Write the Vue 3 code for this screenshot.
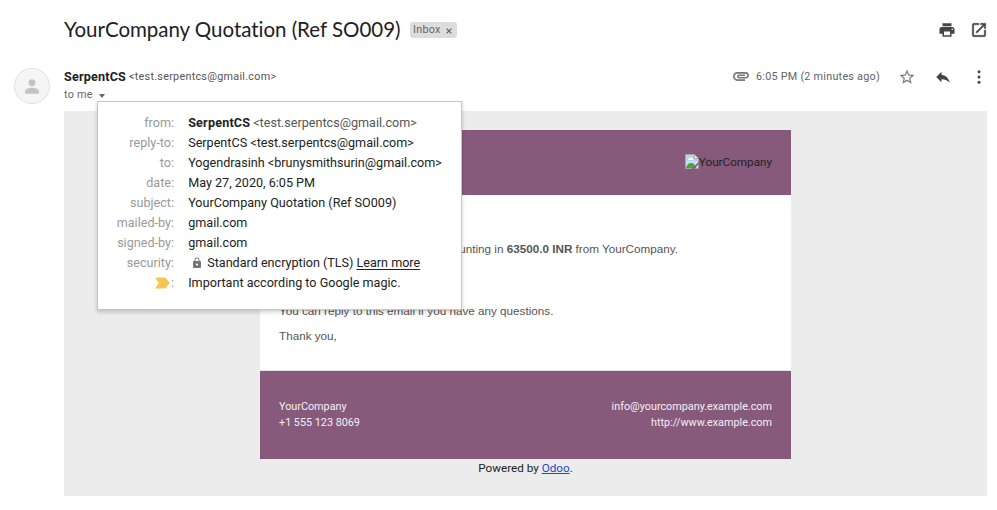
<script setup>
const details = [
  { label: 'from', name: 'SerpentCS', value: '<test.serpentcs@gmail.com>' },
  { label: 'reply-to', value: 'SerpentCS <test.serpentcs@gmail.com>' },
  { label: 'to', value: 'Yogendrasinh <brunysmithsurin@gmail.com>' },
  { label: 'date', value: 'May 27, 2020, 6:05 PM' },
  { label: 'subject', value: 'YourCompany Quotation (Ref SO009)' },
  { label: 'mailed-by', value: 'gmail.com' },
  { label: 'signed-by', value: 'gmail.com' },
  { label: 'security', value: 'Standard encryption (TLS)', secure: true },
  { label: '', value: 'Important according to Google magic.' },
]
</script>

<template>
  <main class="mail">
    <header class="subject">
      <h1>YourCompany Quotation (Ref SO009)</h1>
      <span class="chip">Inbox
        <svg class="close" viewBox="0 0 6 6"><path d="M.6.6l4.8 4.8M5.4.6L.6 5.4" /></svg>
      </span>
      <div class="tools">
        <svg class="icon" viewBox="0 0 24 24"><path d="M19 8H5c-1.66 0-3 1.34-3 3v6h4v4h12v-4h4v-6c0-1.66-1.34-3-3-3zm-3 11H8v-5h8v5zm3-7c-.55 0-1-.45-1-1s.45-1 1-1 1 .45 1 1-.45 1-1 1zm-1-9H6v4h12V3z" /></svg>
        <svg class="icon" viewBox="0 0 24 24"><path d="M19 19H5V5h7V3H5c-1.1 0-2 .9-2 2v14c0 1.100.9 2 2 2h14c1.100 0 2-.9 2-2v-7h-2v7zM14 3v2h3.590l-9.830 9.830 1.410 1.410L19 6.410V10h2V3h-7z" stroke="#444" stroke-width=".5" /></svg>
      </div>
    </header>

    <section class="sender">
      <div class="avatar">
        <svg viewBox="0 0 14 15"><circle cx="7" cy="3.700" r="3.400" /><path d="M0 14.700v-2.200C0 10 3.500 8.800 7 8.800s7 1.200 7 3.700v2.200z" /></svg>
      </div>
      <div class="who">
        <div class="from"><b>SerpentCS</b><span>&lt;test.serpentcs@gmail.com&gt;</span></div>
        <div class="to">
          <span>to me</span><i class="caret"></i>
          <div class="popup">
            <div v-for="(d, i) in details" :key="i" class="row">
              <span class="label">
                <svg v-if="!d.label" class="marker" viewBox="0 0 15 12"><path d="M0 .5h9.500q1 0 1.600.8L14.600 6l-3.500 4.700q-.6.8-1.600.8H0L3.700 6z" /></svg>{{ d.label }}:
              </span>
              <span class="value">
                <b v-if="d.name">{{ d.name }}</b>
                <svg v-if="d.secure" class="lock" viewBox="0 0 24 24"><path d="M18 8h-1V6c0-2.760-2.240-5-5-5S7 3.240 7 6v2H6c-1.100 0-2 .9-2 2v10c0 1.100.9 2 2 2h12c1.100 0 2-.9 2-2V10c0-1.100-.9-2-2-2zm-6 9c-1.100 0-2-.9-2-2s.9-2 2-2 2 .9 2 2-.9 2-2 2zm3.100-9H8.900V6c0-1.710 1.390-3.100 3.100-3.100s3.100 1.390 3.100 3.100v2z" /></svg>
                <span :class="{ soft: d.name }">{{ d.value }}</span>
                <u v-if="d.secure">Learn more</u>
              </span>
            </div>
          </div>
        </div>
      </div>
      <div class="meta">
        <svg class="clip" viewBox="2 7 20 11"><path d="M2 12.500C2 9.460 4.460 7 7.500 7H18c2.210 0 4 1.790 4 4s-1.790 4-4 4H9.500C8.120 15 7 13.880 7 12.500S8.120 10 9.500 10H17v2H9.410c-.55 0-.55 1 0 1H18c1.100 0 2-.9 2-2s-.9-2-2-2H7.500C5.570 9 4 10.570 4 12.500S5.570 16 7.500 16H17v2H7.500C4.460 18 2 15.540 2 12.500z" /></svg>
        <time>6:05 PM (2 minutes ago)</time>
        <svg class="icon star" viewBox="0 0 24 24"><path d="M22 9.240l-7.190-.62L12 2 9.190 8.630 2 9.240l5.460 4.730L5.820 21 12 17.270 18.180 21l-1.630-7.030L22 9.240zM12 15.400l-3.760 2.270 1-4.280-3.320-2.880 4.380-.38L12 6.100l1.710 4.040 4.380.38-3.320 2.880 1 4.280L12 15.400z" /></svg>
        <svg class="icon reply" viewBox="0 0 24 24"><path d="M10 9V5l-7 7 7 7v-4.100c5 0 8.500 1.600 11 5.100-1-5-4-10-11-11z" /></svg>
        <svg class="icon more" viewBox="0 0 24 24"><circle cx="12" cy="5" r="2" /><circle cx="12" cy="12" r="2" /><circle cx="12" cy="19" r="2" /></svg>
      </div>
    </section>

    <section class="body">
      <article class="card">
        <div class="band">
          <svg class="broken" viewBox="0 0 14 15">
            <path d="M.5.500h9L13.500 4.500v10H.5z" fill="#c9dcf4" stroke="#a5a5a5" />
            <path d="M1.500 1.500h7.500V5h4v2H1.500z" fill="#b4d0f3" />
            <path d="M3 5.500q0-1.500 1.500-1.500Q6 2.500 7 4.300q1.300 0 1.300 1.700H3z" fill="#fff" />
            <path d="M1 14q1-5 5.500-5 3 0 4.500 5z" fill="#4aa52f" />
            <path d="M9.500.500v4h4z" fill="#fff" stroke="#a5a5a5" />
            <path d="M14 7.800v2L9.200 15H6.500z" fill="#875a7b" />
          </svg><span>YourCompany</span>
        </div>
        <div class="content">
          <p class="amount">Here is your quotation <b>SO009</b> amounting in <b>63500.0 INR</b> from YourCompany.</p>
          <p class="questions">You can reply to this email if you have any questions.</p>
          <p>Thank you,</p>
        </div>
        <footer class="foot">
          <div>YourCompany<br />+1 555 123 8069</div>
          <div class="links">info@yourcompany.example.com<br />http://www.example.com</div>
        </footer>
      </article>
      <div class="powered">Powered by <a>Odoo</a>.</div>
    </section>
  </main>
</template>

<style>
body { background: #fff; overflow: hidden; }
</style>

<style scoped>
* { box-sizing: border-box; }
.mail { width: 997px; height: 510px; padding: 16px 10px 0 14px; font-family: Roboto, "Liberation Sans", sans-serif; color: #202124; }
.subject { display: flex; height: 28px; padding-left: 50px; align-items: center; }
h1 { margin: 0; padding-bottom: 2px; width: 336px; font: 400 20.500px/26px Lato, sans-serif; font-variant-ligatures: none; letter-spacing: -.03px; white-space: nowrap; color: #202124; }
.chip { display: flex; align-items: center; gap: 5px; width: 47px; height: 16px; margin-left: 10px; padding: 0 4px 1px 3px; border-radius: 3px; background: #ddd; color: #666; font-size: 10.800px; letter-spacing: .27px; }
.close { width: 6px; height: 6px; flex: none; margin-top: 3px; stroke: #666; stroke-width: 1.300; }
.tools { display: flex; gap: 14px; margin-left: auto; margin-right: -1px; }
.icon { width: 18px; height: 18px; fill: #444; display: block; flex: none; }
.sender { display: flex; height: 67px; padding-top: 24px; }
.avatar { display: flex; align-items: center; justify-content: center; width: 36px; height: 36px; border: 1px solid #e0e0e0; border-radius: 50%; background: #f5f5f5; }
.avatar svg { width: 14px; height: 15px; fill: #c4c4c4; }
.who { margin-left: 14px; }
.from { display: flex; height: 17px; line-height: 17px; font-size: 10.800px; white-space: nowrap; color: #555; letter-spacing: .27px; }
.from b { margin-right: 3px; font-size: 12.600px; letter-spacing: .18px; color: #202124; }
.to { position: relative; display: flex; align-items: center; height: 18px; font-size: 10.800px; letter-spacing: .27px; color: #666; }
.caret { margin: 3px 0 0 6px; border: 3.500px solid transparent; border-top: 4px solid #666; border-bottom: 0; }
.popup { position: absolute; z-index: 2; left: 33px; top: 16px; width: 365px; height: 209px; padding-top: 11px; border: 1px solid #c6c6c6; background: #fff; box-shadow: 0 2px 4px rgba(0, 0, 0, .2); font-size: 12.600px; letter-spacing: 0; color: #222; white-space: nowrap; }
.row { display: flex; height: 20px; line-height: 20px; gap: 14.200px; }
.row b { letter-spacing: .18px; }
.label { display: flex; justify-content: flex-end; align-items: center; width: 76px; color: #999; }
.value { display: flex; align-items: center; gap: 3px; }
.soft { color: #555; }
.marker { width: 15px; height: 12px; margin-right: .5px; fill: #f7c64f; }
.lock { width: 12px; height: 12px; margin: 0 1px 0 3px; fill: #777; }
u { text-underline-offset: 2px; }
.meta { display: flex; align-items: center; height: 18px; margin-left: auto; margin-right: -1px; }
.clip { width: 16px; height: 9px; margin-top: -2px; fill: #777; }
time { width: 124px; margin-left: 7px; margin-top: -1px; font-size: 10.800px; letter-spacing: .25px; color: #5f6368; white-space: nowrap; }
.star { margin-left: 18px; fill: #777; }
.reply { margin-left: 18px; }
.more { margin-left: 18px; }
.body { width: 923px; height: 385px; margin-left: 50px; padding-top: 19px; background: #ececec; }
.card { width: 531px; margin-left: 196px; background: #fff; }
.band { display: flex; justify-content: flex-end; align-items: center; height: 65px; padding: 0 19px 2px 0; background: #875a7b; font-size: 11.700px; color: #222; }
.broken { width: 14px; height: 15px; }
.content { height: 176px; padding: 45px 19px 0; border-bottom: 1px solid #e7e5e7; font: 11.700px/18px "Liberation Sans", Arial, sans-serif; color: #555; }
p { margin: 0 0 7px; white-space: nowrap; }
.amount { display: block; text-align: right; margin-right: 94px; margin-bottom: 44px; }
.foot { display: flex; justify-content: space-between; height: 88px; padding: 28px 19px 0; background: #875a7b; color: #f5f0f4; font-size: 10.800px; line-height: 16px; }
.links { text-align: right; }
.powered { width: 531px; margin-left: 196px; line-height: 18px; text-align: center; font-size: 11.700px; color: #222; }
.powered a { color: #2347d5; text-decoration: underline; text-underline-offset: 1px; }
</style>
